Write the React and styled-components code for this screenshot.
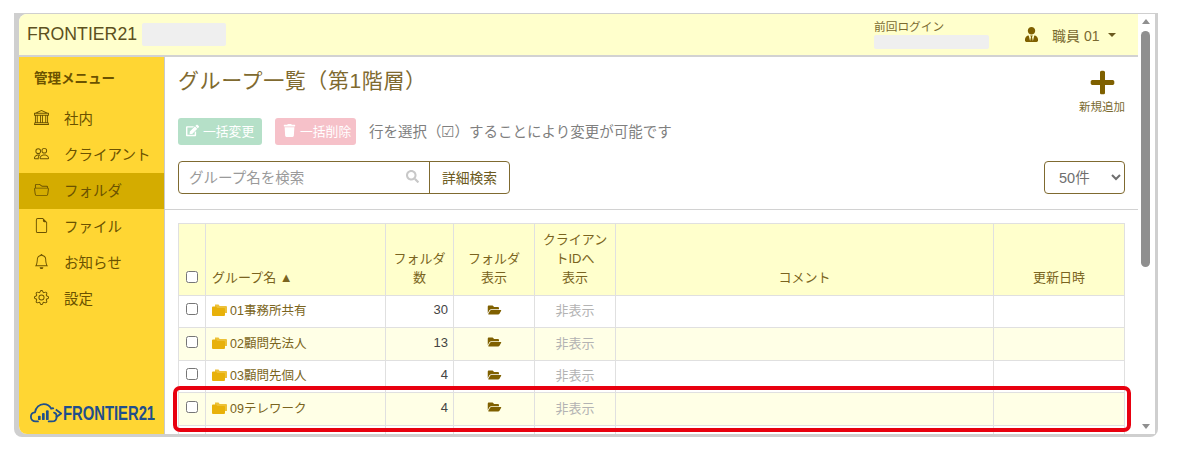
import React from "react";
import styled, { createGlobalStyle } from "styled-components";
import { BsBank, BsPeople, BsFolder2Open, BsFileEarmark, BsBell, BsGear } from "react-icons/bs";
import { FaEdit, FaTrash, FaSearch, FaPlus, FaFolderOpen, FaUserTie } from "react-icons/fa";

const Global = createGlobalStyle`
  html, body { margin: 0; background: #fff; overflow: hidden; }
  body { font-family: "Liberation Sans", "Noto Sans CJK JP", sans-serif; color: #7f6000; }
  * { box-sizing: border-box; }
`;
const Frame = styled.div`
  margin: 13px 0 0 14px; width: 1144px; height: 424px;
  background: #cfcfcf; border-radius: 0 0 8px 8px; padding: 1px 3px 3px 5px;
  display: flex;
`;
const Page = styled.div`
  flex: 1; min-width: 0; display: flex; flex-direction: column;
  background: #fff; border-radius: 8px 0 0 8px; overflow: hidden;
`;
const Header = styled.header`
  height: 43px; flex: none; display: flex; align-items: center;
  background: #ffffcc; border-bottom: 2px solid #d2d2d2; padding-left: 8px;
`;
const Brand = styled.div`font-size: 17.7px; color: #5c5020; width: 115px;`;
const Blank = styled.div`
  background: #efefef; border-radius: 2px;
  width: ${p => p.$w}px; height: ${p => p.$h}px;
`;
const Login = styled.div`
  margin-left: 648px; width: 151px; font-size: 11.7px; color: #7a6a30; line-height: 14px;
  display: flex; flex-direction: column; gap: 1px; padding-top: 3px; align-self: flex-start; margin-top: 3px;
`;
const UserBox = styled.div`
  display: flex; align-items: center; font-size: 14px; color: #7a6a30;
  svg { color: #7f6000; width: 13px; height: 15px; margin-right: 14px; }
`;
const Caret = styled.span`
  margin-left: 9px; border: 4px solid transparent; border-top-color: #6b5a20;
  border-bottom: 0; width: 0; height: 0;
`;
const Body = styled.div`flex: 1; min-height: 0; display: flex;`;
const Side = styled.nav`
  width: 146px; flex: none; background: #ffd633; border-right: 1px solid #c9c9c9;
  display: flex; flex-direction: column;
`;
const SideTitle = styled.div`
  height: 44px; padding: 10px 0 0 15px; font-size: 13.5px; font-weight: 700; color: #6b5200;
`;
const SideItem = styled.div`
  height: 36px; display: flex; align-items: center; padding: 0 0 4px 15px;
  font-size: 14.5px; color: #6b5200; gap: 15px;
  background: ${p => (p.$active ? "#d4ac00" : "transparent")};
  svg { width: 15px; height: 15px; flex: none; }
`;
const Logo = styled.div`
  margin-top: auto; height: 42px; padding: 0 0 0 11px; display: flex; align-items: center; gap: 1px;
  svg { flex: none; }
`;
const LogoText = styled.span`
  display: inline-block; transform: scaleX(.74); transform-origin: left center; white-space: nowrap;
  font-size: 20px; font-weight: 700; color: #1f4f8c;
`;
const Main = styled.main`flex: 1; min-width: 0; overflow: hidden; display: flex; flex-direction: column;`;
const Top = styled.div`
  height: 153px; flex: none; border-bottom: 1px solid #d2d2d2; padding: 0 13px;
  display: flex; flex-direction: column;
`;
const TitleRow = styled.div`height: 61px; display: flex; justify-content: space-between;`;
const Title = styled.h1`
  margin: 9px 0 0; font-size: 21px; font-weight: 400; line-height: 30px; color: #806a30; letter-spacing: .6px;
`;
const AddBtn = styled.div`
  display: flex; flex-direction: column; align-items: center; font-size: 11.5px; color: #7a6a30; padding-top: 12px; gap: 2px;
  svg { width: 27px; height: 27px; color: #7f6000; }
`;
const BulkRow = styled.div`display: flex; align-items: center; height: 27px; font-size: 14.5px; color: #7f7f7f;`;
const Bulk = styled.div`
  display: flex; align-items: center; gap: 4px; height: 27px; border-radius: 3px; color: #fff;
  font-size: 12.8px; background: ${p => p.$bg}; width: ${p => p.$w}px; padding: 0 0 2px 8px;
  margin-right: 13px;
  svg { width: 13px; height: 13px; flex: none; }
`;
const Hint = styled.span`padding-bottom: 3px;`;
const SearchRow = styled.div`display: flex; justify-content: space-between; margin-top: 16px;`;
const Search = styled.div`
  width: 332px; height: 33px; display: flex; align-items: stretch;
  border: 1px solid #7f6a30; border-radius: 4px; background: #fff;
`;
const SearchInput = styled.div`
  flex: 1; display: flex; align-items: center; justify-content: space-between;
  padding: 0 10px 2px; font-size: 14.5px; color: #9a9a9a; border-right: 1px solid #7f6a30;
  svg { width: 13px; height: 13px; color: #c8c8c8; }
`;
const SearchBtn = styled.div`
  width: 79px; display: flex; align-items: center; justify-content: center; font-size: 13.8px; color: #6b5a20; padding-bottom: 2px;
`;
const PerPage = styled.select`
  width: 81px; height: 33px; border: 1px solid #7f6a30; border-radius: 4px; background: #fff;
  color: #6f6f6f; font: 14.5px "Liberation Sans", "Noto Sans CJK JP", sans-serif; padding-left: 10px;
`;
const TableWrap = styled.div`padding: 13px 13px 0; flex: 1; min-height: 0;`;
const Table = styled.table`
  width: 946px; table-layout: fixed; border-collapse: collapse; font-size: 13px;
`;
const Th = styled.th`
  background: #ffffcc; border: 1px solid #e0e0e0; font-weight: 400; color: #7a6420;
  vertical-align: bottom; padding: 0 5px 8px; line-height: 19px; font-size: 13px;
  text-align: ${p => p.$left ? "left" : "center"};
  padding-left: ${p => p.$left ? "6px" : "5px"};
  input { margin-bottom: 4px; }
`;
const HeadRow = styled.tr`height: 72px;`;
const Tr = styled.tr`
  height: ${p => p.$h}px; background: ${p => (p.$alt ? "#ffffe6" : "#fff")};
`;
const Td = styled.td`
  border: 1px solid #e0e0e0; padding: 0 5px 4px; vertical-align: middle; overflow: hidden;
  text-align: ${p => p.$align || "left"}; color: ${p => p.$color || "#7a6420"};
  white-space: nowrap; font-size: 13px;
`;
const Check = styled.input.attrs({ type: "checkbox" })`
  width: 12px; height: 12px; display: block; margin: 0 auto 1px;
`;
const NameCell = styled.span`
  display: inline-flex; align-items: center; gap: 3px; font-size: 12.5px; padding-left: 1px;
`;
const OpenIcon = styled(FaFolderOpen)`width: 15px; height: 12px; color: #7f6000; display: block; margin: 0 auto;`;
const Scroll = styled.div`
  width: 17px; flex: none; background: #fff; display: flex; flex-direction: column; align-items: center;
  padding: 5px 2px 5px 0;
`;
const Arrow = styled.div`
  width: 0; height: 0; border-left: 4.5px solid transparent; border-right: 4.5px solid transparent;
  ${p => p.$up ? "border-bottom: 5px solid #8f8f8f;" : "border-top: 5px solid #8f8f8f;"}
`;
const Thumb = styled.div`width: 9px; height: 236px; margin-top: 7px; background: #8f8f8f; border-radius: 5px;`;
const Spacer = styled.div`flex: 1;`;
const Highlight = styled.div`
  position: absolute; left: 173px; top: 386px; width: 958px; height: 46px;
  border: 4px solid #e8000f; border-radius: 7px; pointer-events: none;
`;

const GroupIcon = () => (
  <svg width="15" height="13" viewBox="0 0 15 13" fill="#e8b10a">
    <path d="M3 1.5h3.5l1.2 1.4H14a1 1 0 0 1 1 1v6H3z" opacity=".8" />
    <path d="M0 4.5a1 1 0 0 1 1-1h3l1.2 1.4H12a1 1 0 0 1 1 1V12a1 1 0 0 1-1 1H1a1 1 0 0 1-1-1z" />
  </svg>
);
const Cloud = () => (
  <svg width="32" height="22" viewBox="0 0 36 24" fill="none">
    <path d="M9 21.5H6.5C3 21.5 1 19 1 16.2c0-2.8 2-4.8 4.6-5C6.5 6 10.5 2 15.5 2c3.7 0 6.7 1.9 8.3 5 .8-.3 1.6-.4 2.4-.3" stroke="#1f4f8c" strokeWidth="2" strokeLinecap="round" />
    <path d="M27 11.5c2.5.6 3 2.2 3 4.3 0 3.2-2 5.7-5.5 5.7H21" stroke="#1f4f8c" strokeWidth="2" strokeLinecap="round" />
    <rect x="9" y="15" width="3" height="5" rx="1" fill="#1f4f8c" />
    <rect x="13.5" y="12" width="3" height="8" rx="1" fill="#1f4f8c" />
    <rect x="18" y="9" width="3" height="11" rx="1" fill="#1f4f8c" />
    <path d="M29 8l6 4.5-6 4.5" stroke="#1f4f8c" strokeWidth="2" />
  </svg>
);

const menu = [
  [BsBank, "社内"], [BsPeople, "クライアント"], [BsFolder2Open, "フォルダ", true],
  [BsFileEarmark, "ファイル"], [BsBell, "お知らせ"], [BsGear, "設定"],
];
const rows = [
  ["01事務所共有", 30, false, 32], ["02顧問先法人", 13, true, 33],
  ["03顧問先個人", 4, false, 32], ["09テレワーク", 4, true, 33], ["", "", false, 32],
];

export default function App() {
  return (
    <>
      <Global />
      <Frame>
        <Page>
          <Header>
            <Brand>FRONTIER21</Brand>
            <Blank $w={84} $h={23} />
            <Login>
              前回ログイン
              <Blank $w={115} $h={14} />
            </Login>
            <UserBox>
              <FaUserTie />
              職員 01
              <Caret />
            </UserBox>
          </Header>
          <Body>
            <Side>
              <SideTitle>管理メニュー</SideTitle>
              {menu.map(([Icon, label, active]) => (
                <SideItem key={label} $active={active}><Icon />{label}</SideItem>
              ))}
              <Logo><Cloud /><LogoText>FRONTIER21</LogoText></Logo>
            </Side>
            <Main>
              <Top>
                <TitleRow>
                  <Title>グループ一覧（第1階層）</Title>
                  <AddBtn><FaPlus />新規追加</AddBtn>
                </TitleRow>
                <BulkRow>
                  <Bulk $bg="#b5e0c8" $w={84}><FaEdit />一括変更</Bulk>
                  <Bulk $bg="#f6c1c9" $w={81}><FaTrash />一括削除</Bulk>
                  <Hint>行を選択（☑）することにより変更が可能です</Hint>
                </BulkRow>
                <SearchRow>
                  <Search>
                    <SearchInput>グループ名を検索<FaSearch /></SearchInput>
                    <SearchBtn>詳細検索</SearchBtn>
                  </Search>
                  <PerPage defaultValue="50"><option value="50">50件</option></PerPage>
                </SearchRow>
              </Top>
              <TableWrap>
                <Table>
                  <colgroup>
                    {[27, 180, 68, 81, 81, 378, 131].map((w, i) => <col key={i} width={w} />)}
                  </colgroup>
                  <thead>
                    <HeadRow>
                      <Th><Check /></Th>
                      <Th $left>グループ名 ▲</Th>
                      <Th>フォルダ<br />数</Th>
                      <Th>フォルダ<br />表示</Th>
                      <Th>クライアン<br />トIDへ<br />表示</Th>
                      <Th>コメント</Th>
                      <Th>更新日時</Th>
                    </HeadRow>
                  </thead>
                  <tbody>
                    {rows.map(([name, n, alt, h], i) => (
                      <Tr key={i} $alt={alt} $h={h}>
                        <Td>{name && <Check />}</Td>
                        <Td>{name && <NameCell><GroupIcon />{name}</NameCell>}</Td>
                        <Td $align="right" $color="#444">{n}</Td>
                        <Td>{name && <OpenIcon />}</Td>
                        <Td $align="center" $color="#b3b3b3">{name && "非表示"}</Td>
                        <Td />
                        <Td />
                      </Tr>
                    ))}
                  </tbody>
                </Table>
              </TableWrap>
            </Main>
          </Body>
        </Page>
        <Scroll>
          <Arrow $up />
          <Thumb />
          <Spacer />
          <Arrow />
        </Scroll>
      </Frame>
      <Highlight />
    </>
  );
}
